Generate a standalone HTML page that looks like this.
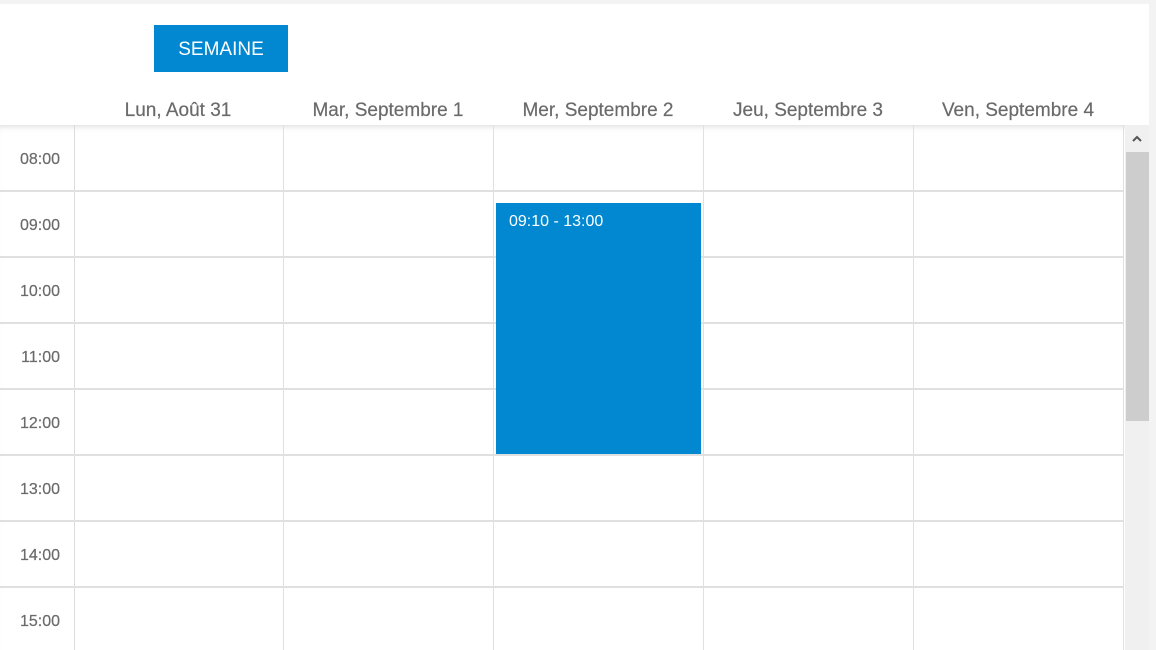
<!DOCTYPE html>
<html><head><style>
body{margin:0;width:1156px;height:650px;overflow:hidden;background:#f3f3f3;font-family:"Liberation Sans",sans-serif;position:relative}
.a{position:absolute}
.hd{font-size:19px;color:#6a6a6a;top:100px;text-align:center;width:210px;-webkit-text-stroke:0.2px #6a6a6a}
.t{font-size:16px;color:#6a6a6a;left:0;width:60px;text-align:right;-webkit-text-stroke:0.2px #6a6a6a}
</style></head><body>
<div class="a" style="left:0;top:4px;width:1149px;height:89px;background:#fff"></div>
<div class="a" style="left:154px;top:25px;width:134px;height:47px;background:#0288d1;color:#fff;font-size:19px;line-height:50px;text-align:center">SEMAINE</div>
<div class="a" style="left:0;top:93px;width:1149px;height:32px;background:#fff"></div>
<div class="a" style="left:0;top:125px;width:1125px;height:525px;background:#fff;box-shadow:inset 0 6px 8px -6px rgba(0,0,0,.2)"></div>
<div class="a hd" style="left:73px">Lun, Août 31</div>
<div class="a hd" style="left:283px">Mar, Septembre 1</div>
<div class="a hd" style="left:493px">Mer, Septembre 2</div>
<div class="a hd" style="left:703px">Jeu, Septembre 3</div>
<div class="a hd" style="left:913px">Ven, Septembre 4</div>
<div class="a" style="left:74px;top:125px;width:1px;height:525px;background:#dcdcdc"></div>
<div class="a" style="left:283px;top:125px;width:1px;height:525px;background:#e0e0e0"></div>
<div class="a" style="left:493px;top:125px;width:1px;height:525px;background:#e0e0e0"></div>
<div class="a" style="left:703px;top:125px;width:1px;height:525px;background:#e0e0e0"></div>
<div class="a" style="left:913px;top:125px;width:1px;height:525px;background:#e0e0e0"></div>
<div class="a" style="left:1123px;top:125px;width:1px;height:525px;background:#e0e0e0"></div>
<div class="a" style="left:0;top:190px;width:1123px;height:2px;background:#e0e0e0"></div>
<div class="a" style="left:0;top:256px;width:1123px;height:2px;background:#e0e0e0"></div>
<div class="a" style="left:0;top:322px;width:1123px;height:2px;background:#e0e0e0"></div>
<div class="a" style="left:0;top:388px;width:1123px;height:2px;background:#e0e0e0"></div>
<div class="a" style="left:0;top:454px;width:1123px;height:2px;background:#e0e0e0"></div>
<div class="a" style="left:0;top:520px;width:1123px;height:2px;background:#e0e0e0"></div>
<div class="a" style="left:0;top:586px;width:1123px;height:2px;background:#e0e0e0"></div>
<div class="a t" style="top:151px">08:00</div>
<div class="a t" style="top:217px">09:00</div>
<div class="a t" style="top:283px">10:00</div>
<div class="a t" style="top:349px">11:00</div>
<div class="a t" style="top:415px">12:00</div>
<div class="a t" style="top:481px">13:00</div>
<div class="a t" style="top:547px">14:00</div>
<div class="a t" style="top:613px">15:00</div>
<div class="a" style="left:496px;top:203px;width:205px;height:251px;background:#0288d1"></div>
<div class="a" style="left:509px;top:213px;color:#fff;font-size:16px">09:10 - 13:00</div>
<div class="a" style="left:1125px;top:125px;width:24px;height:525px;background:#f0f0f0"></div>
<div class="a" style="left:1126px;top:152px;width:23px;height:269px;background:#cdcdcd"></div>
<svg class="a" style="left:1131px;top:134px" width="12" height="10"><path d="M2 7L6 3L10 7" stroke="#555" stroke-width="2" fill="none"/></svg>
</body></html>
